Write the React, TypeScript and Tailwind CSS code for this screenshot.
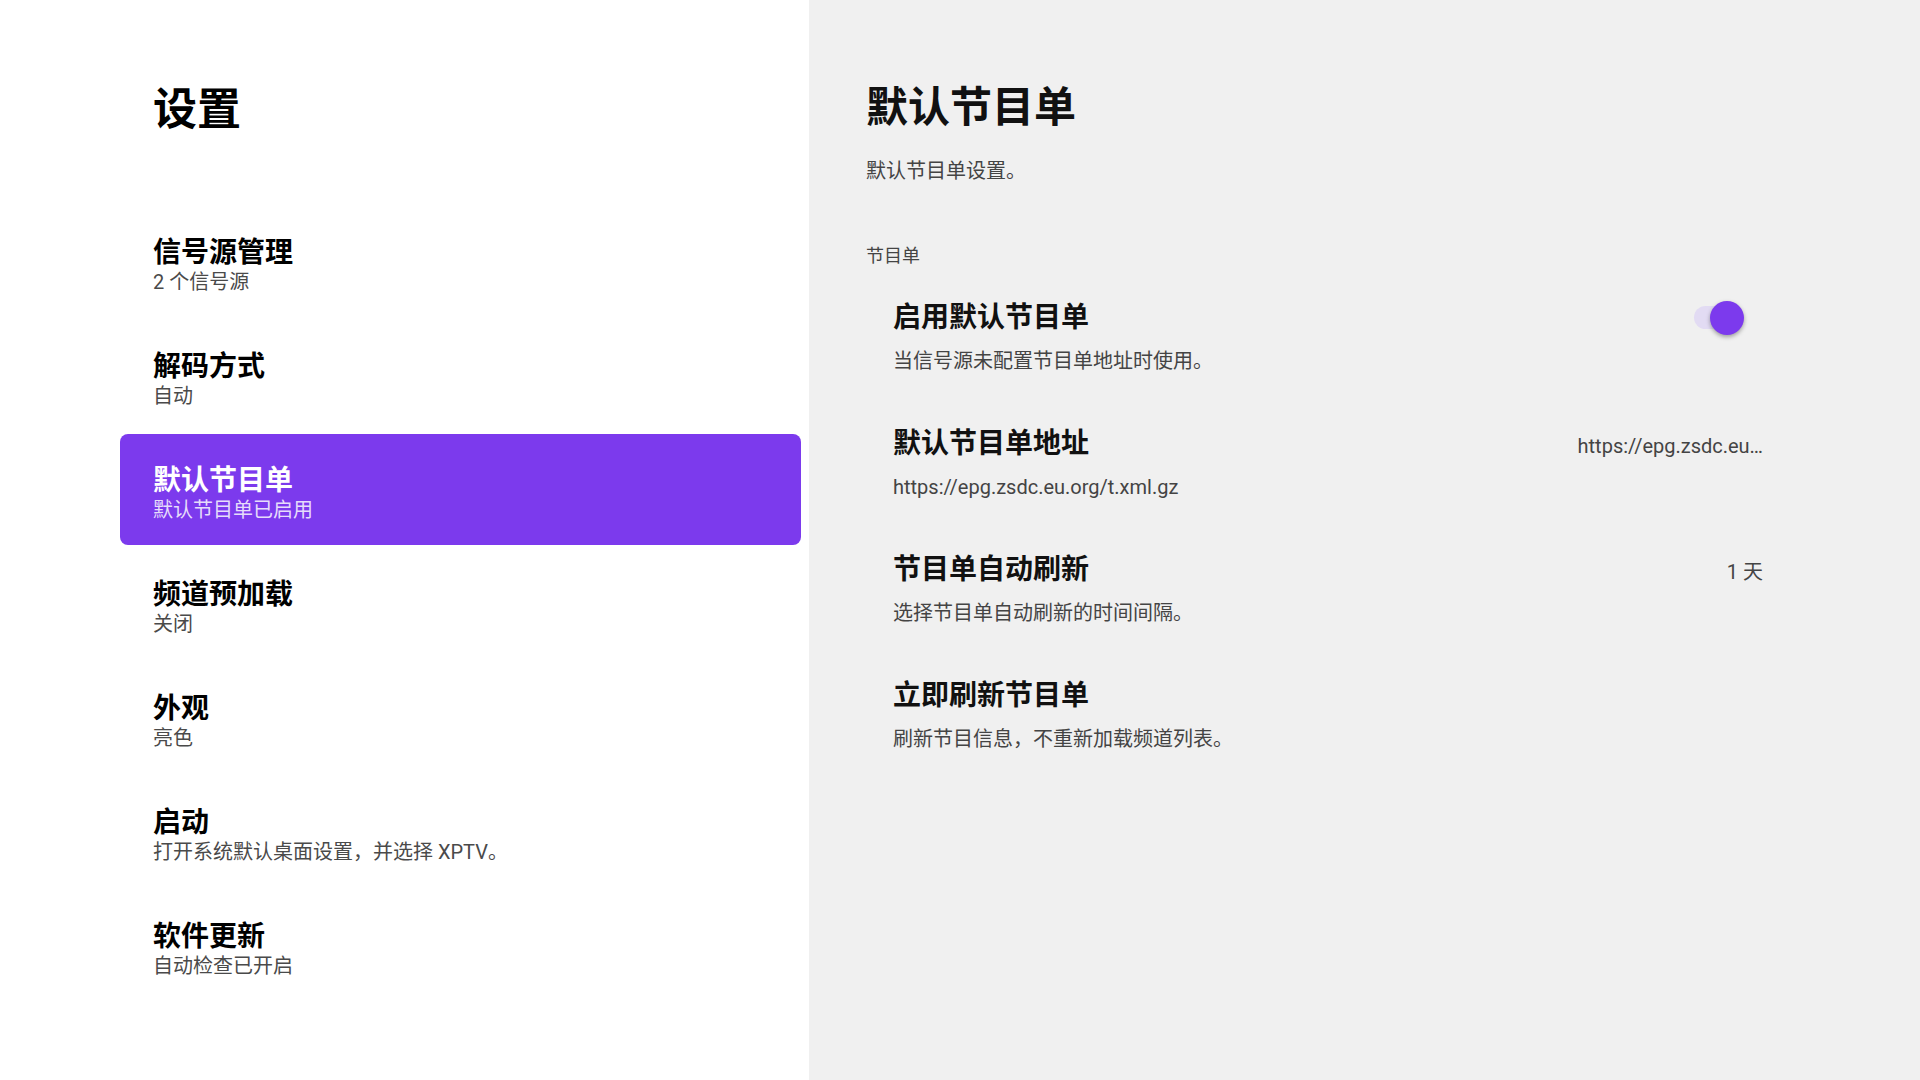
import { useState } from 'react'

const FONT = { fontFamily: 'Roboto, "Noto Sans CJK SC", sans-serif' }

const MENU = [
  { key: 'sources', title: '信号源管理', sub: '2 个信号源' },
  { key: 'decoder', title: '解码方式', sub: '自动' },
  { key: 'epg', title: '默认节目单', sub: '默认节目单已启用' },
  { key: 'preload', title: '频道预加载', sub: '关闭' },
  { key: 'theme', title: '外观', sub: '亮色' },
  { key: 'boot', title: '启动', sub: '打开系统默认桌面设置，并选择 XPTV。' },
  { key: 'update', title: '软件更新', sub: '自动检查已开启' },
]

function Toggle({ on, onChange }: { on: boolean; onChange: (v: boolean) => void }) {
  return (
    <button onClick={() => onChange(!on)} className="relative w-[56px] h-[36px] mr-[16px] flex items-center">
      <span className={['absolute left-[3px] w-[48px] h-[23px] rounded-full', on ? 'bg-[#e2dbf3]' : 'bg-[#d6d6d6]'].join(' ')} />
      <span
        className={[
          'absolute w-[34px] h-[34px] rounded-full shadow-[0_2px_4px_rgba(0,0,0,0.35)] transition-all',
          on ? 'left-[19px] bg-[#7c3aed]' : 'left-0 bg-[#fafafa]',
        ].join(' ')}
      />
    </button>
  )
}

export default function App() {
  const [selected, setSelected] = useState('epg')
  const [enabled, setEnabled] = useState(true)

  const rows = [
    { title: '启用默认节目单', desc: '当信号源未配置节目单地址时使用。', right: <Toggle on={enabled} onChange={setEnabled} /> },
    { title: '默认节目单地址', desc: 'https://epg.zsdc.eu.org/t.xml.gz', right: <span className="pt-[5px] text-[20px] leading-[26px] text-[#444] whitespace-nowrap">https://epg.zsdc.eu…</span> },
    { title: '节目单自动刷新', desc: '选择节目单自动刷新的时间间隔。', right: <span className="pt-[5px] text-[20px] leading-[26px] text-[#444]">1 天</span> },
    { title: '立即刷新节目单', desc: '刷新节目信息，不重新加载频道列表。', right: null },
  ]

  return (
    <div className="flex w-[1920px] h-[1080px] overflow-hidden bg-[#f0f0f0]" style={FONT}>
      {/* left menu */}
      <div className="w-[809px] h-full bg-white pl-[120px] pr-[8px]">
        <h1 className="pl-[33px] pt-[84px] text-[44px] leading-[52px] font-bold text-black">设置</h1>
        <div className="mt-[70px] flex flex-col gap-[3px]">
          {MENU.map(m => {
            const active = m.key === selected
            return (
              <button
                key={m.key}
                onClick={() => setSelected(m.key)}
                className={[
                  'h-[111px] px-[33px] pt-[8px] flex flex-col justify-center text-left rounded-[8px]',
                  active ? 'bg-[#7c3aed]' : 'bg-transparent',
                ].join(' ')}
              >
                <span className={['text-[28px] leading-[32px] font-bold', active ? 'text-white' : 'text-black'].join(' ')}>{m.title}</span>
                <span className={['text-[20px] leading-[26px]', active ? 'text-[#e6dcfb]' : 'text-[#4a4a4a]'].join(' ')}>{m.sub}</span>
              </button>
            )
          })}
        </div>
      </div>

      {/* right detail */}
      <div className="flex-1 pl-[57px] pr-[130px]">
        <h2 className="pt-[83px] text-[42px] leading-[50px] font-bold text-[#111]">默认节目单</h2>
        <p className="mt-[24px] text-[20px] leading-[28px] text-[#444]">默认节目单设置。</p>
        <p className="mt-[59px] text-[18px] leading-[24px] text-[#444]">节目单</p>
        <div className="mt-[6px] flex flex-col">
          {rows.map(r => (
            <div key={r.title} className="h-[126px] px-[27px] flex flex-col justify-center">
              <div className="flex items-center justify-between h-[34px]">
                <span className="text-[28px] leading-[34px] font-bold text-[#111]">{r.title}</span>
                {r.right}
              </div>
              <span className="mt-[13px] text-[20px] leading-[26px] text-[#444]">{r.desc}</span>
            </div>
          ))}
        </div>
      </div>
    </div>
  )
}
